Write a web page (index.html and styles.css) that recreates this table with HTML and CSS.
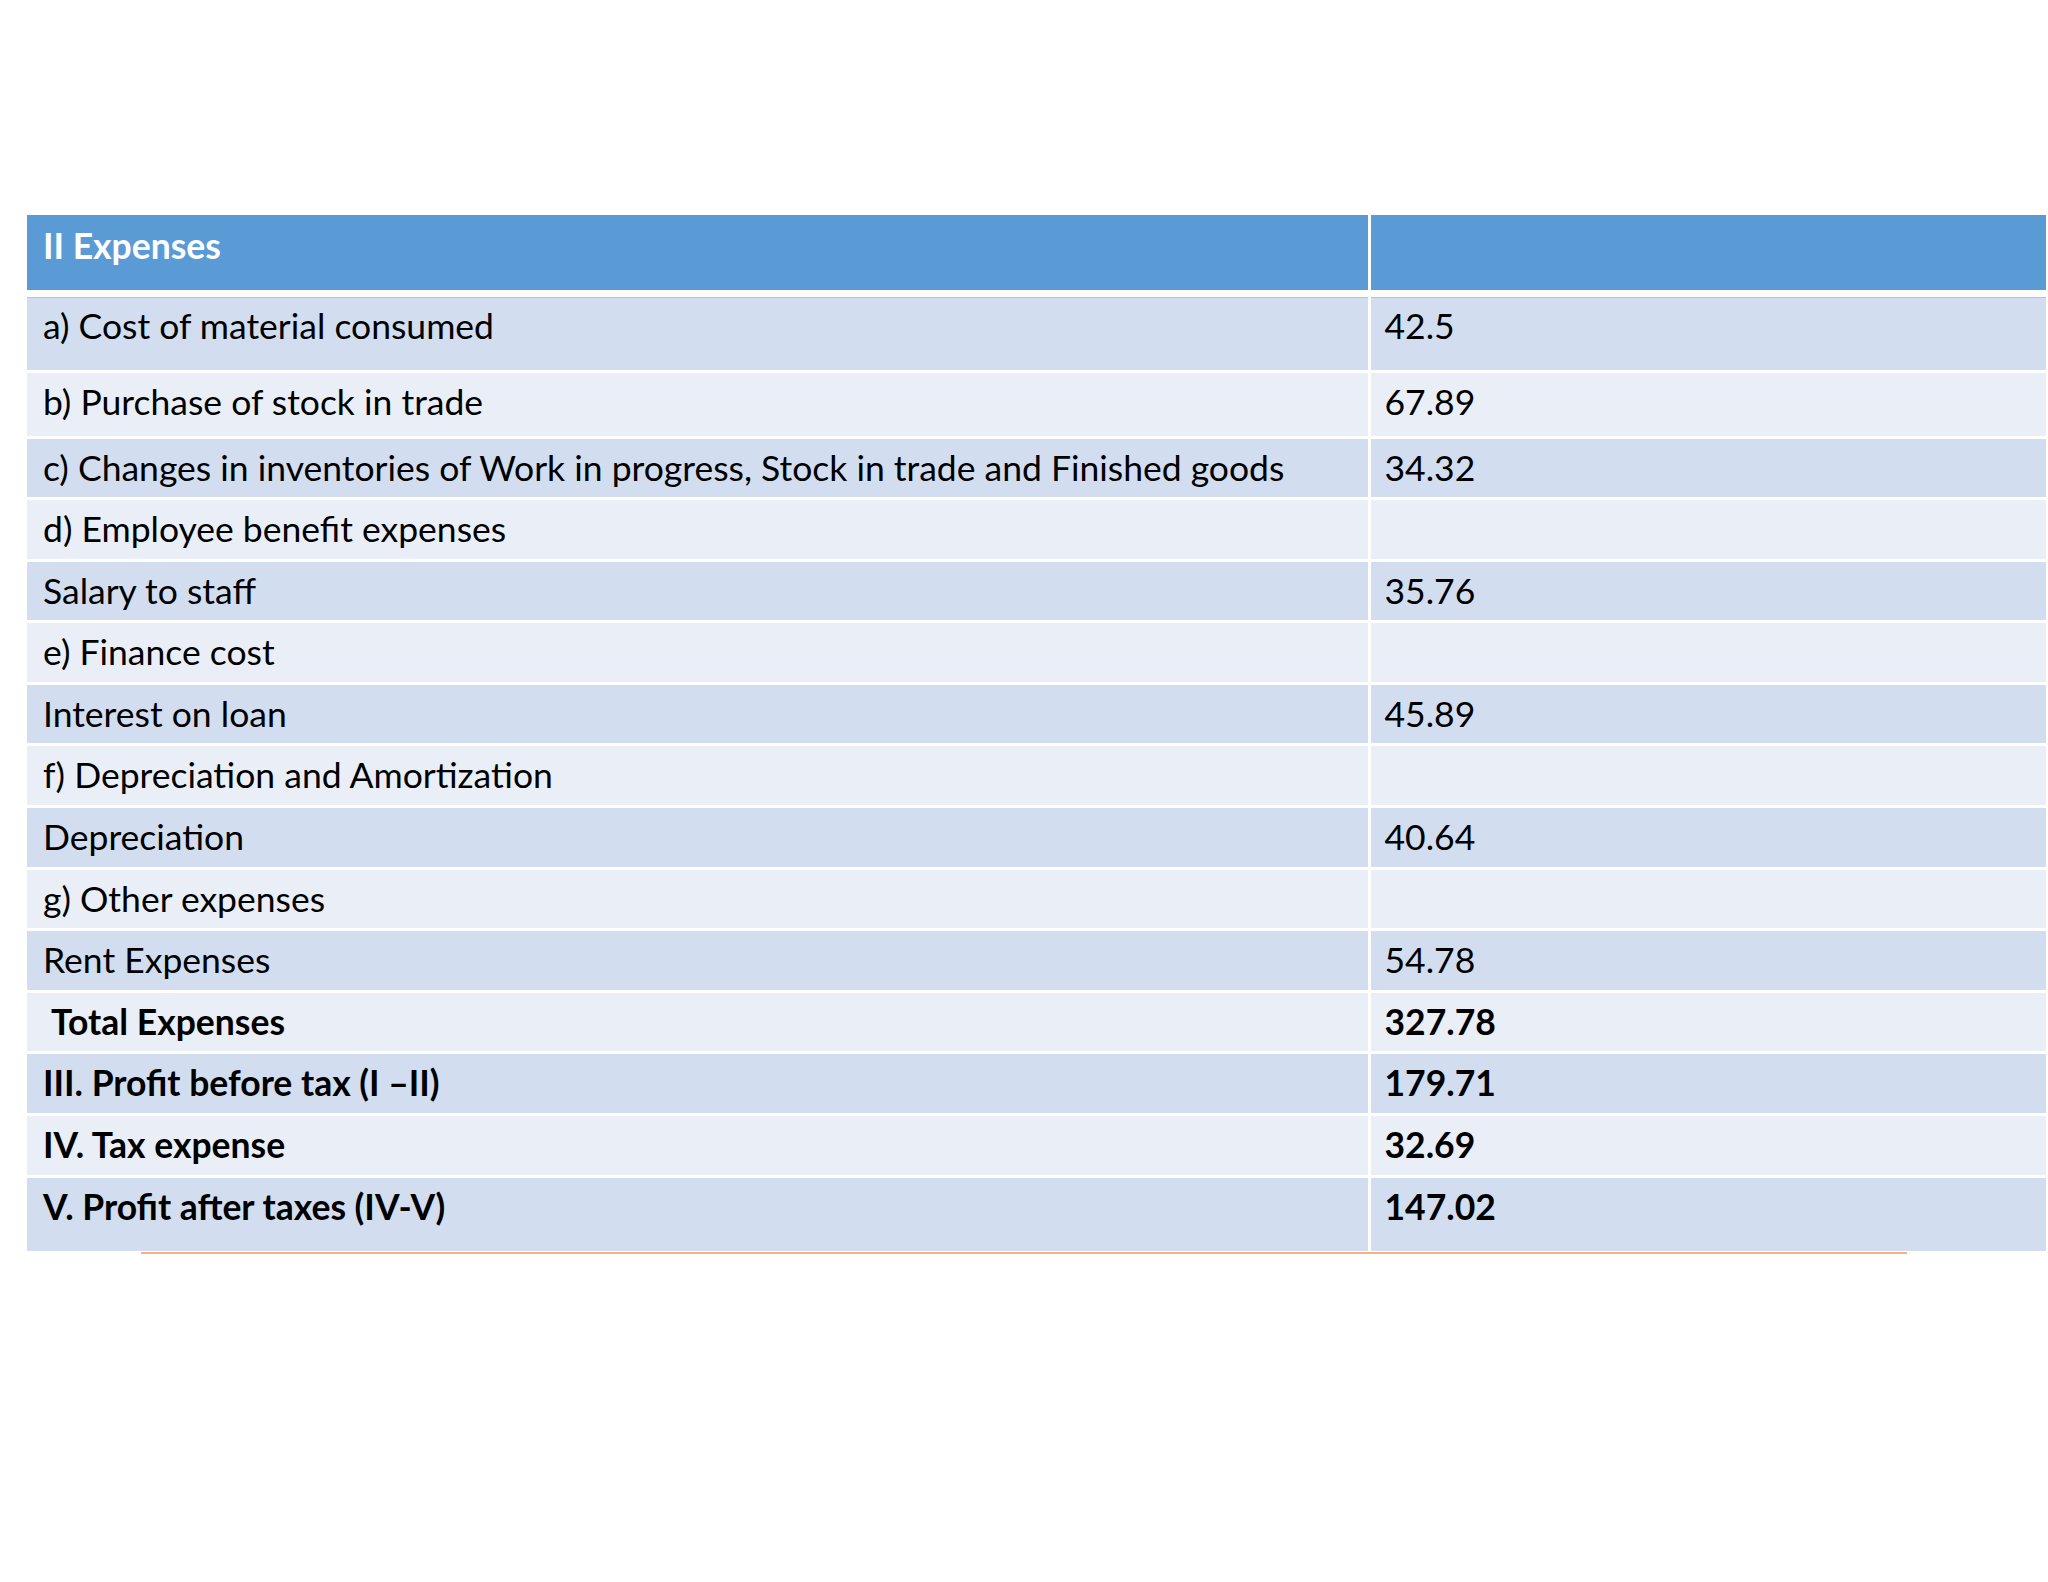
FILE: index.html
```html
<!DOCTYPE html>
<html>
<head>
<meta charset="utf-8">
<link rel="stylesheet" href="styles.css">
</head>
<body>
<div class="slide">
  <table class="fin">
    <colgroup><col class="c1"><col class="c2"></colgroup>
    <thead>
      <tr class="hdr tall"><th>II Expenses</th><th></th></tr>
    </thead>
    <tbody>
      <tr class="odd tall"><td>a) Cost of material consumed</td><td>42.5</td></tr>
      <tr class="even mid"><td>b) Purchase of stock in trade</td><td>67.89</td></tr>
      <tr class="odd"><td>c) Changes in inventories of Work in progress, Stock in trade and Finished goods</td><td>34.32</td></tr>
      <tr class="even"><td>d) Employee benefit expenses</td><td></td></tr>
      <tr class="odd"><td>Salary to staff</td><td>35.76</td></tr>
      <tr class="even"><td>e) Finance cost</td><td></td></tr>
      <tr class="odd"><td>Interest on loan</td><td>45.89</td></tr>
      <tr class="even"><td>f) Depreciation and Amortization</td><td></td></tr>
      <tr class="odd"><td>Depreciation</td><td>40.64</td></tr>
      <tr class="even"><td>g) Other expenses</td><td></td></tr>
      <tr class="odd"><td>Rent Expenses</td><td>54.78</td></tr>
      <tr class="even bold"><td><span class="indent">Total Expenses</span></td><td>327.78</td></tr>
      <tr class="odd bold"><td>III. Profit before tax (I –II)</td><td>179.71</td></tr>
      <tr class="even bold"><td>IV. Tax expense</td><td>32.69</td></tr>
      <tr class="odd bold last"><td>V. Profit after taxes (IV-V)</td><td>147.02</td></tr>
    </tbody>
  </table>
  <div class="rule"></div>
</div>
</body>
</html>
```

FILE: styles.css
```css
html, body {
  margin: 0;
  padding: 0;
  background: #ffffff;
}
.slide {
  width: 2048px;
  height: 1582px;
  padding-top: 215px;
  padding-left: 27px;
  box-sizing: border-box;
  overflow: hidden;
}
.fin {
  width: 2019px;
  table-layout: fixed;
  border-collapse: collapse;
  font-family: "Lato", "Liberation Sans", sans-serif;
  font-size: 35.5px;
  color: #000;
}
.c1 { width: 1342px; }
.c2 { width: 677px; }
.fin th, .fin td {
  height: 50px;
  line-height: 58.6px;
  padding: 0 0 0 16px;
  vertical-align: top;
  text-align: left;
  white-space: nowrap;
  border-top: 3px solid #ffffff;
  border-right: 3px solid #ffffff;
  box-sizing: border-box;
}
.fin td:last-child, .fin th:last-child {
  padding-left: 14px;
  border-right: 0;
}
.fin tr.tall th, .fin tr.tall td { height: 78px; }
.fin tr.last td { height: 75px; }
.fin tr.mid td { height: 66px; }
.hdr th {
  background: #5b9bd5;
  color: #ffffff;
  font-weight: 700;
  border-top: 0;
  padding-top: 2px;
}
tbody tr:first-child td {
  border-top: 7px solid #ffffff;
  box-shadow: inset 0 1px 0 #a9c4e6;
}
.odd td { background: #d2deef; }
.even td { background: #eaeff7; }
.bold td { font-weight: 700; }
.indent { padding-left: 8px; }
.rule {
  width: 1766px;
  height: 2px;
  margin-left: 114px;
  margin-top: 1px;
  background: #f4b183;
}
```
